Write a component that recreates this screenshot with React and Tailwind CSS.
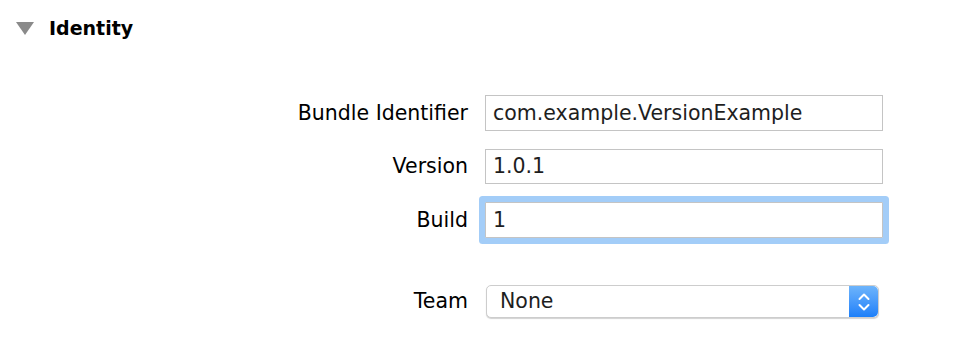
import React from 'react';

const Field = ({ value, focused }) => (
  <div
    className={`h-full w-[398px] bg-white border border-[#c4c4c4] flex items-center pl-[7px] text-[20.5px] text-[#1e1e1e] ${
      focused ? 'rounded-[1px] shadow-[0_0_0_6px_#a3cdf8]' : ''
    }`}
  >
    {value}
  </div>
);

const Stepper = () => (
  <div className="w-[29px] h-full rounded-r-[5px] bg-gradient-to-b from-[#6db4fb] to-[#1b7ff9] flex items-center justify-center">
    <svg width="14" height="22" viewBox="0 0 14 22" fill="none" stroke="white" strokeWidth="2" strokeLinecap="round" strokeLinejoin="round">
      <path d="M2.5 8 L7 3.5 L11.5 8" />
      <path d="M2.5 14 L7 18.5 L11.5 14" />
    </svg>
  </div>
);

const Row = ({ label, height, children }) => (
  <div className={`flex items-center ${height}`}>
    <div className="w-[468px] text-right text-[20.5px] text-black">{label}</div>
    <div className="ml-[17px] h-full flex">{children}</div>
  </div>
);

export default function App() {
  return (
    <div className="w-[954px] h-[346px] bg-white overflow-hidden font-['DejaVu_Sans',sans-serif]">
      {/* Section header */}
      <div className="flex items-center h-[24px] mt-[16px] pl-[16px]">
        <svg width="18" height="13" viewBox="0 0 18 13">
          <polygon points="0,0 18,0 9,13" fill="#8a8a8a" />
        </svg>
        <span className="ml-[15px] text-[19px] font-bold text-black">Identity</span>
      </div>

      {/* Form */}
      <div className="mt-[55px] flex flex-col">
        <Row label="Bundle Identifier" height="h-[36px]">
          <Field value="com.example.VersionExample" />
        </Row>
        <div className="mt-[18px]">
          <Row label="Version" height="h-[35px]">
            <Field value="1.0.1" />
          </Row>
        </div>
        <div className="mt-[18px]">
          <Row label="Build" height="h-[36px]">
            <Field value="1" focused />
          </Row>
        </div>
        <div className="mt-[47px]">
          <Row label="Team" height="h-[33px]">
            <div className="ml-[1px] w-[393px] h-full flex bg-white border border-[#cdcdcd] rounded-[5px] shadow-[0_1px_1px_rgba(0,0,0,0.18)]">
              <div className="flex-1 flex items-center pl-[13px] text-[20.5px] text-[#1e1e1e]">None</div>
              <Stepper />
            </div>
          </Row>
        </div>
      </div>
    </div>
  );
}
